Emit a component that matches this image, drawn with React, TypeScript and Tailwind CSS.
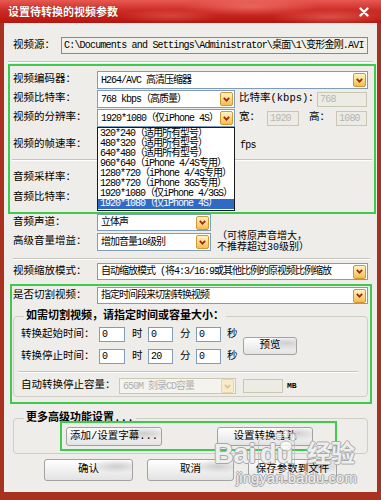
import type { ReactNode } from 'react';

// SimSun-like mix: mono latin, CJK fallback
const data = 'text-[10px] tracking-[-0.8px]';

function Arrow({ off }: { off?: boolean }) {
  return (
    <span
      className={`flex h-[14px] w-[13px] shrink-0 items-center justify-center rounded-[2px] border ${
        off ? 'border-[#e8d6aa] bg-[#f8ecc8]' : 'border-[#d29834] bg-[linear-gradient(180deg,#fff4c6,#f5bd4c)]'
      }`}
    >
      <svg width="7" height="5" viewBox="0 0 7 5">
        <path d="M0.8 0.8 L3.5 3.7 L6.2 0.8" fill="none" stroke={off ? '#dfc497' : '#9c2a0c'} strokeWidth="1.7" />
      </svg>
    </span>
  );
}

function Select({ text, className, off, children }: { text: string; className: string; off?: boolean; children?: ReactNode }) {
  return (
    <div
      className={`relative flex shrink-0 items-center border pl-[3px] pr-[1px] text-[10px] tracking-[-1px] ${
        off ? 'border-[#cbc8b6] bg-[#f4f3ee] text-[#b0b0b0]' : 'border-[#7f9db9] bg-white text-black'
      } ${className}`}
    >
      <span className="flex-1 overflow-hidden whitespace-nowrap">{text}</span>
      <Arrow off={off} />
      {children}
    </div>
  );
}

function Field({ value, className, off }: { value?: string; className: string; off?: boolean }) {
  return (
    <div
      className={`flex shrink-0 items-center border pl-[2px] ${data} ${
        off ? 'border-[#c9c6b3] bg-[#ecebe4] text-[#b6b6b6]' : 'border-[#7f9db9] bg-white text-black'
      } ${className}`}
    >
      {value}
    </div>
  );
}

function Btn({ children, className }: { children: ReactNode; className: string }) {
  return (
    <button
      className={`flex shrink-0 items-center justify-center rounded-[3px] border border-[#a2a2a2] bg-[radial-gradient(ellipse_28px_7px_at_82%_32%,#cdcdcd,transparent),linear-gradient(180deg,#ffffff,#e3e3e3)] text-[10.5px] text-black ${className}`}
    >
      {children}
    </button>
  );
}

function Sep({ className }: { className: string }) {
  return <div className={`h-0 border-t border-b border-t-[#c6c5bd] border-b-white ${className}`} />;
}

const resolutions = [
  '320*240（适用所有型号）',
  '480*320（适用所有型号）',
  '640*480（适用所有型号）',
  '960*640（iPhone 4/4S专用）',
  '1280*720（iPhone 4/4S专用）',
  '1280*720（iPhone 3GS专用）',
  '1920*1080（仅iPhone 4/3GS）',
  '1920*1080（仅iPhone 4S）',
];

export default function App() {
  return (
    <div className="relative flex h-[500px] w-[381px] flex-col bg-[#a8321f] font-['Liberation_Mono','Noto_Sans_CJK_SC',monospace] text-black">
      {/* Title bar */}
      <div className="flex h-[23px] shrink-0 items-center justify-between bg-[radial-gradient(ellipse_70px_9px_at_250px_7px,rgba(255,150,140,0.45),transparent),radial-gradient(ellipse_60px_8px_at_330px_17px,rgba(255,150,140,0.4),transparent),radial-gradient(ellipse_50px_7px_at_170px_16px,rgba(255,150,140,0.3),transparent),linear-gradient(180deg,#e65a52_0%,#cd2b25_45%,#b7160f_100%)] pl-[8px] pr-[12px]">
        <span className="font-['Noto_Sans_CJK_SC',sans-serif] text-[11px] font-bold text-white [text-shadow:0_0_1px_#7a0f0a]">
          设置待转换的视频参数
        </span>
        <svg width="10" height="10" viewBox="0 0 10 10">
          <path d="M1.5 1.5 L8.5 8.5 M8.5 1.5 L1.5 8.5" stroke="#ffffff" strokeWidth="2.4" strokeLinecap="round" />
        </svg>
      </div>

      {/* Client area */}
      <div className="mx-[4px] mb-[8px] flex flex-1 flex-col bg-[#eeede9] text-[10.5px]">
        {/* Source */}
        <div className="mt-[14px] flex h-[17px] items-center">
          <span className="w-[57px] shrink-0 pl-[9px]">视频源：</span>
          <div className={`flex h-[17px] w-[307px] items-center border border-[#8a8a80] bg-[#f1f0e8] pl-[2px] ${data} whitespace-nowrap`}>
            C:\Documents and Settings\Administrator\桌面\1\变形金刚.AVI
          </div>
        </div>

        <Sep className="mx-[4px] mt-[7px]" />

        {/* Video settings */}
        <div className="ml-[4px] mt-[1px] flex h-[150px] w-[368px] flex-col border-2 border-[#3fca4e] pt-[5px]">
          <div className="flex h-[18px] items-center pl-[3px]">
            <span className="w-[84px] shrink-0">视频编码器：</span>
            <Select text="H264/AVC 高清压缩器" className="h-[18px] w-[271px]" />
          </div>
          <div className="mt-[1px] flex h-[18px] items-center pl-[3px]">
            <span className="w-[84px] shrink-0">视频比特率：</span>
            <Select text="768 kbps（高质量）" className="h-[18px] w-[138px]" />
            <span className="ml-[4px] w-[78px] shrink-0 whitespace-nowrap">比特率(kbps)：</span>
            <Field off value="768" className="h-[15px] w-[50px]" />
          </div>
          <div className="relative z-10 mt-[1px] flex h-[18px] items-center pl-[3px]">
            <span className="w-[84px] shrink-0">视频的分辨率：</span>
            <Select text="1920*1080（仅iPhone 4S）" className="h-[18px] w-[138px]">
              <div className="absolute left-[-1px] top-[17px] w-[138px] border border-[#1a1a1a] bg-white py-[1px]">
                {resolutions.map((r, i) => (
                  <div
                    key={r}
                    className={`h-[10px] whitespace-nowrap pl-[2px] leading-[10px] ${
                      i === resolutions.length - 1 ? 'bg-[#316ac5] text-white' : 'text-black'
                    }`}
                  >
                    {r}
                  </div>
                ))}
              </div>
            </Select>
            <span className="ml-[4px] w-[28px] shrink-0">宽：</span>
            <Field off value="1920" className="h-[15px] w-[32px]" />
            <span className="ml-[10px] w-[27px] shrink-0">高：</span>
            <Field off value="1080" className="h-[15px] w-[31px]" />
          </div>
          <div className="mt-[9px] flex h-[18px] items-center pl-[3px]">
            <span className="w-[84px] shrink-0">视频的帧速率：</span>
            <span className={`ml-[143px] ${data}`}>fps</span>
          </div>
          <Sep className="mx-[2px] mt-[5px]" />
          <div className="mt-[8px] flex h-[18px] items-center pl-[3px]">
            <span className="w-[84px] shrink-0">音频采样率：</span>
          </div>
          <div className="mt-[2px] flex h-[18px] items-center pl-[3px]">
            <span className="w-[84px] shrink-0">音频比特率：</span>
          </div>
        </div>

        {/* Audio */}
        <div className="flex h-[17px] items-center pl-[9px]">
          <span className="w-[84px] shrink-0">音频声道：</span>
          <Select text="立体声" className="h-[17px] w-[114px]" />
        </div>
        <div className="mt-[2px] flex h-[18px] items-center pl-[9px]">
          <span className="w-[84px] shrink-0">高级音量增益：</span>
          <Select text="增加音量10级别" className="h-[18px] w-[114px]" />
          <div className="ml-[6px] text-[10px] leading-[11px]">
            <div>（可将原声音增大，</div>
            <div>不推荐超过30级别）</div>
          </div>
        </div>

        <Sep className="ml-[9px] mr-[7px] mt-[7px]" />

        <div className="mt-[3px] flex h-[17px] items-center pl-[9px]">
          <span className="w-[84px] shrink-0">视频缩放模式：</span>
          <Select text="自动缩放模式 (将4:3/16:9或其他比例的原视频比例缩放" className="h-[17px] w-[271px]" />
        </div>

        {/* Cut video */}
        <div className="ml-[6px] mt-[4px] flex w-[362px] flex-col border-2 border-[#3fca4e] pb-[5px]">
          <div className="mt-[1px] flex h-[17px] items-center pl-[1px]">
            <span className="w-[84px] shrink-0">是否切割视频：</span>
            <Select text="指定时间段来切割转换视频" className="h-[17px] w-[271px]" />
          </div>

          <div className="ml-[1px] mt-[12px] flex w-[355px] flex-col rounded-[4px] border border-[#cfcec3] pb-[2px]">
            <span className="-mt-[8px] ml-[10px] self-start bg-[#eeede9] px-[2px] text-[11px] font-bold leading-[14px]">
              如需切割视频，请指定时间或容量大小：
            </span>
            <div className="mt-[4px] flex items-center">
              <div className="flex flex-col">
                {[
                  ['转换起始时间：', '0', '0', '0'],
                  ['转换停止时间：', '0', '20', '0'],
                ].map((row, i) => (
                  <div key={row[0]} className={`flex h-[15px] items-center pl-[7px] ${i ? 'mt-[7px]' : ''}`}>
                    <span className="w-[78px] shrink-0">{row[0]}</span>
                    <Field value={row[1]} className="h-[15px] w-[26px]" />
                    <span className="w-[23px] shrink-0 pl-[7px]">时</span>
                    <Field value={row[2]} className="h-[15px] w-[25px]" />
                    <span className="w-[23px] shrink-0 pl-[7px]">分</span>
                    <Field value={row[3]} className="h-[15px] w-[25px]" />
                    <span className="w-[16px] shrink-0 pl-[6px]">秒</span>
                  </div>
                ))}
              </div>
              <Btn className="ml-[6px] h-[18px] w-[54px]">预览</Btn>
            </div>
            <Sep className="ml-[4px] mr-[9px] mt-[7px]" />
            <div className="mt-[5px] flex h-[16px] items-center pl-[7px]">
              <span className="w-[98px] shrink-0">自动转换停止容量：</span>
              <Select off text="650M 刻录CD容量" className="h-[16px] w-[117px]" />
              <Field off className="ml-[7px] h-[14px] w-[40px]" />
              <span className="ml-[4px] text-[8px] font-bold">MB</span>
            </div>
          </div>
        </div>

        {/* More settings */}
        <div className="relative ml-[9px] mt-[14px] flex w-[355px] flex-col rounded-[4px] border border-[#cfcec3] pb-[7px]">
          <span className="-mt-[8px] ml-[10px] self-start bg-[#eeede9] px-[2px] text-[11px] font-bold leading-[14px]">
            更多高级功能设置...
          </span>
          <div className="mt-[2px] flex gap-[55px] pl-[52px]">
            <Btn className="h-[19px] w-[96px]">添加/设置字幕...</Btn>
            <Btn className="h-[19px] w-[96px]">设置转换音轨</Btn>
          </div>
          <div className="absolute left-[46px] top-[2px] h-[30px] w-[277px] border-2 border-[#3fca4e]" />
        </div>

        {/* Dialog buttons */}
        <div className="mt-[5px] flex gap-[14px] pl-[40px]">
          <Btn className="h-[22px] w-[89px]">确认</Btn>
          <Btn className="h-[22px] w-[87px]">取消</Btn>
          <Btn className="h-[22px] w-[89px]">保存参数到文件</Btn>
        </div>
      </div>

      {/* Watermark */}
      <div className="pointer-events-none absolute left-[214px] top-[438px] flex flex-col font-['Liberation_Sans','Noto_Sans_CJK_SC',sans-serif] text-white/80 [text-shadow:1px_0_0_#a8a8a8,-1px_0_0_#a8a8a8,0_1px_0_#a8a8a8,0_-1px_0_#a8a8a8]">
        <div className="flex items-center text-[27px] font-bold leading-[30px]">
          <span>Bai</span>
          <span className="ml-[2px] rounded-[5px] border border-[#b8b8b8]/70 px-[1px]">du</span>
          <svg width="26" height="24" viewBox="0 0 26 24" className="-ml-[22px] -mt-[24px]">
            <g fill="rgba(255,255,255,0.75)" stroke="#a8a8a8" strokeWidth="0.8">
              <ellipse cx="6" cy="6" rx="3" ry="4" />
              <ellipse cx="13" cy="4" rx="3" ry="4" />
              <ellipse cx="20" cy="7" rx="3" ry="4" />
              <ellipse cx="13" cy="16" rx="6" ry="5" />
            </g>
          </svg>
          <span className="ml-[8px] text-[24px]">经验</span>
        </div>
        <span className="ml-[22px] text-[15px] leading-[16px]">jingyan.baidu.com</span>
      </div>
    </div>
  );
}
